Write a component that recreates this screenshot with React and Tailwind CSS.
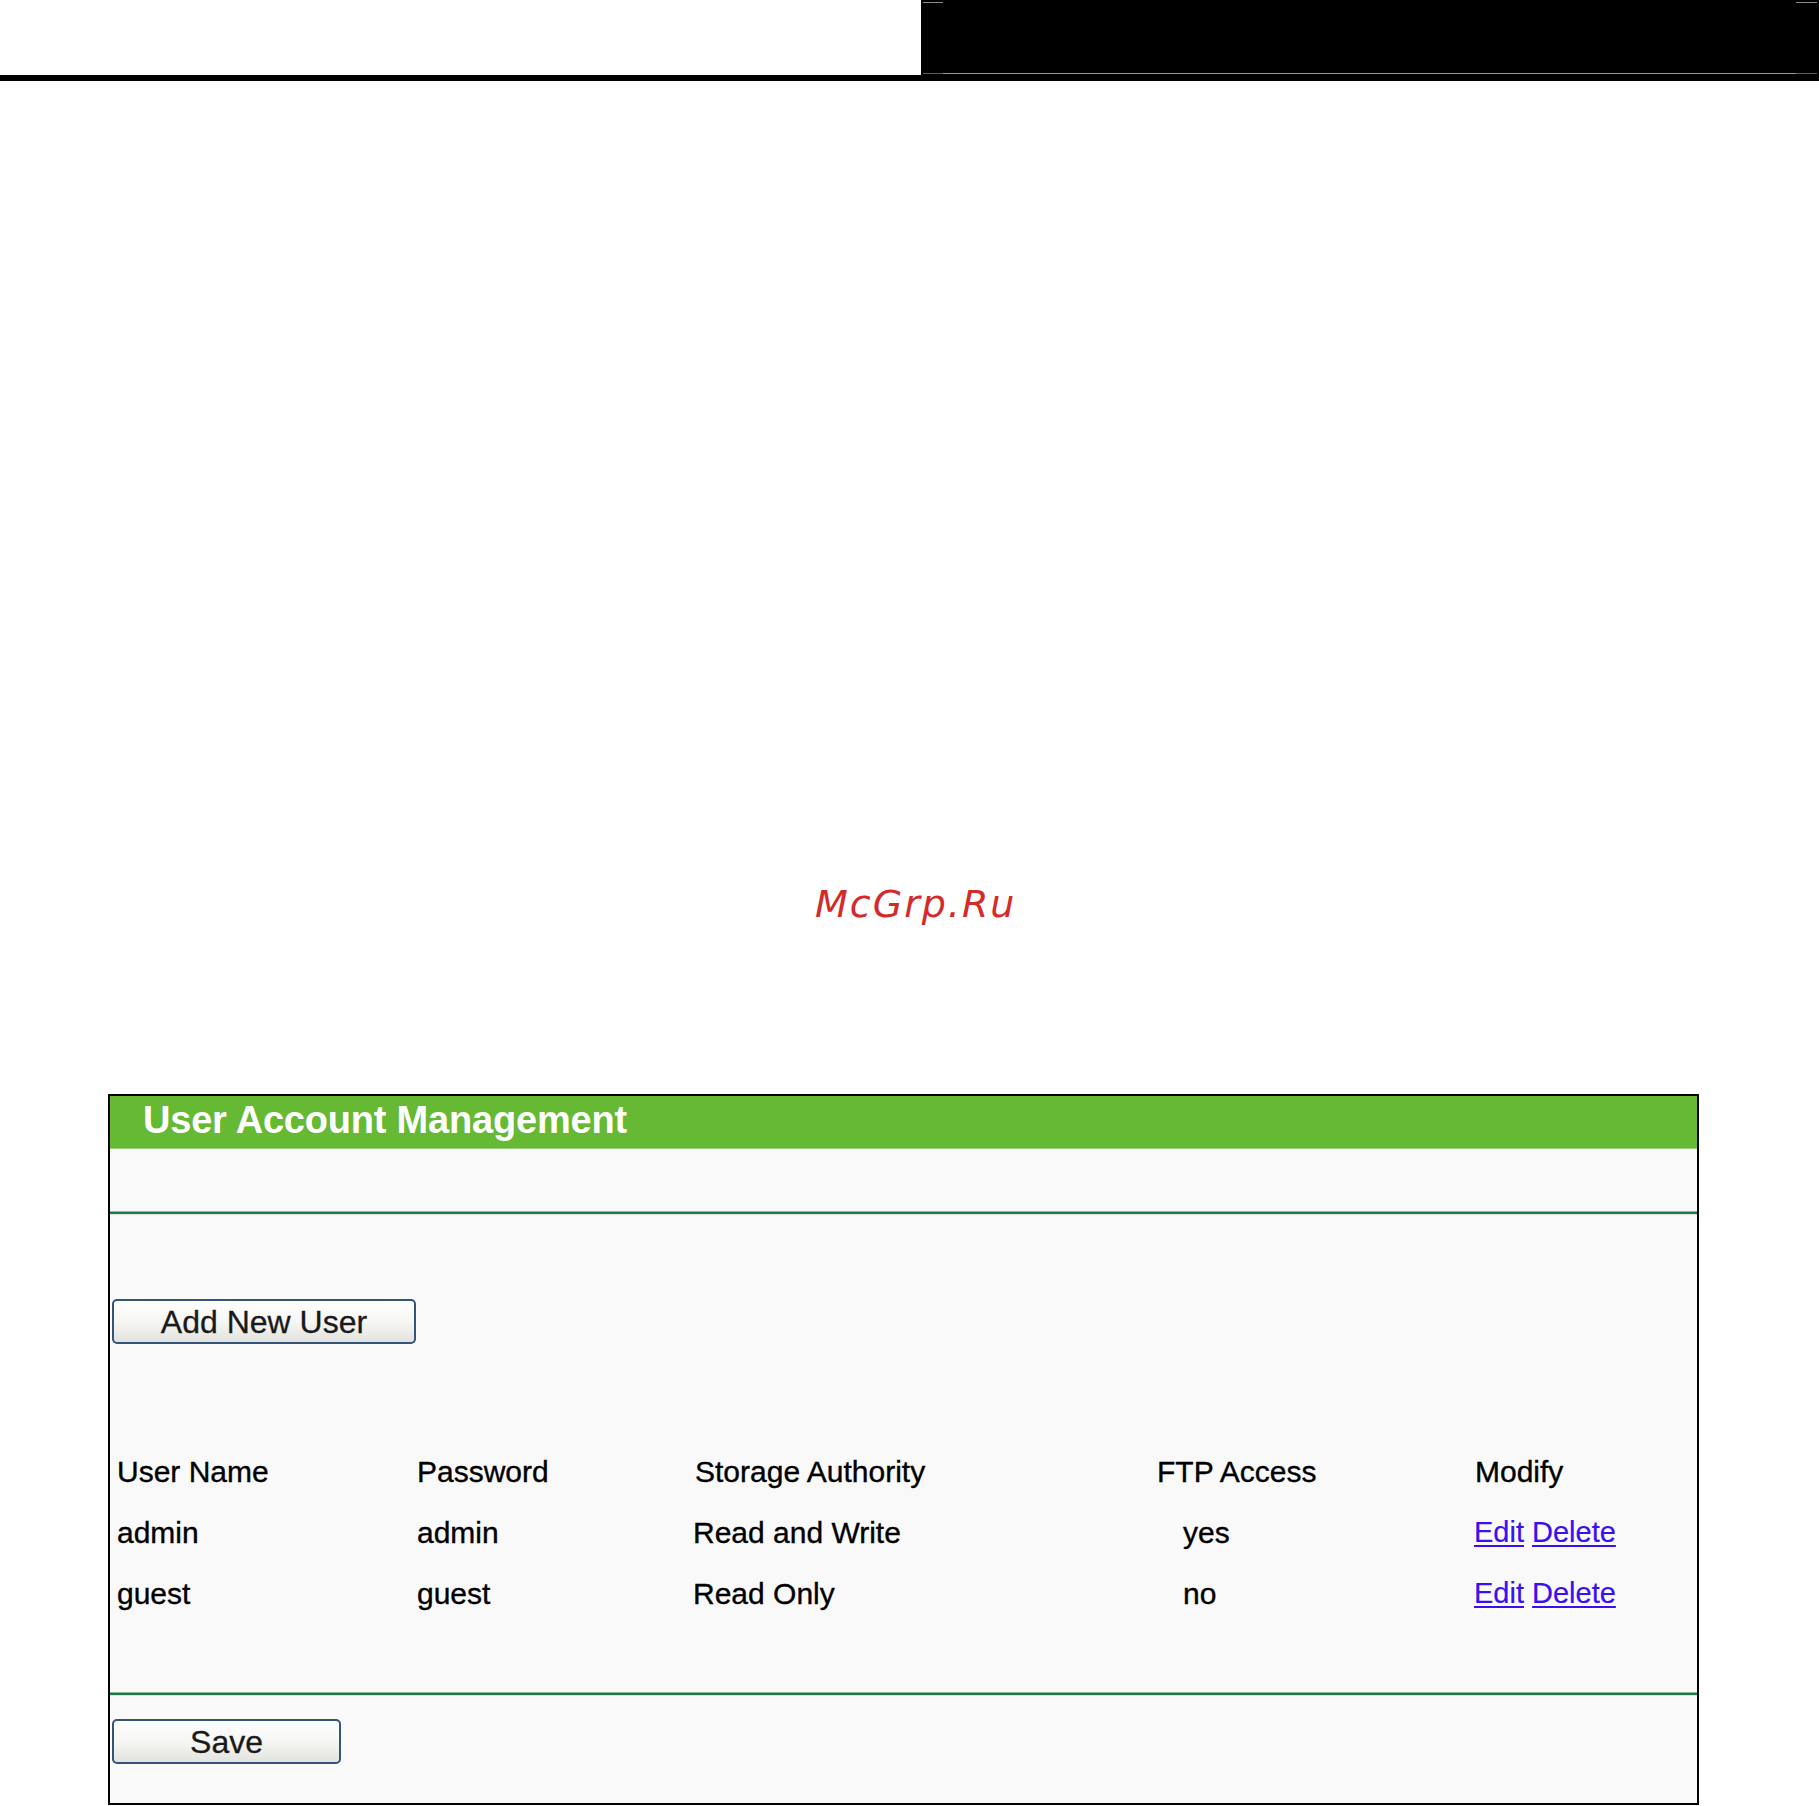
import React from "react";

const rows = [
  { name: "admin", pass: "admin", auth: "Read and Write", ftp: "yes" },
  { name: "guest", pass: "guest", auth: "Read Only", ftp: "no" },
];

function Btn({ children, w }) {
  return (
    <button
      className={`${w} h-[45px] rounded-[5px] border-2 border-[#34547a] bg-gradient-to-b from-[#ffffff] via-[#f6f6f4] to-[#e2e2de] text-[32px] leading-none text-[#1a1a1a] flex items-center justify-center [-webkit-text-stroke:0.3px_#1a1a1a]`}
      style={{ fontFamily: '"Liberation Sans", Arial, sans-serif' }}
    >
      {children}
    </button>
  );
}

function Divider() {
  return (
    <div className="flex flex-col">
      <div className="h-px bg-[#8fb99c]" />
      <div className="h-[2px] bg-[#22784a]" />
      <div className="h-px bg-[#d9e6dd]" />
    </div>
  );
}

export default function App() {
  return (
    <div
      className="w-[1819px] h-[1806px] bg-white overflow-hidden flex flex-col"
      style={{ fontFamily: '"Liberation Sans", Arial, sans-serif' }}
    >
      {/* top bar */}
      <div className="flex h-[75px]">
        <div className="w-[921px] bg-white" />
        <div className="flex-1 bg-black flex flex-col justify-between">
          <div className="flex justify-between pt-[2px] px-[2px]">
            <div className="w-[20px] h-px bg-[#8a8a8a]" />
            <div className="w-[21px] h-px bg-[#8a8a8a]" />
          </div>
          <div className="flex px-[2px] pb-px">
            <div className="w-[20px] h-px bg-[#5a5a5a]" />
            <div className="flex-1 h-px bg-[#9a9a9a]" />
            <div className="w-[21px] h-px bg-[#5a5a5a]" />
          </div>
        </div>
      </div>
      <div className="h-[6px] bg-black" />

      {/* watermark */}
      <div className="mt-[801px] pl-[815px] h-[44px]">
        <span
          className="italic text-[38px] leading-[44px] tracking-[2px] text-[#d42a2a]"
          style={{ fontFamily: '"DejaVu Sans", Verdana, sans-serif' }}
        >
          McGrp.Ru
        </span>
      </div>

      {/* panel */}
      <div className="mt-[168px] ml-[108px] w-[1591px] h-[711px] border-2 border-black bg-[#f9f9f9] flex flex-col">
        <div className="h-[53px] bg-[#66b933] flex flex-col">
          <div className="flex-1 pl-[33px]">
            <span className="text-white font-bold text-[38px] leading-[49px] tracking-[-0.2px]">
              User Account Management
            </span>
          </div>
          <div className="h-px bg-[#9ccf7e]" />
        </div>
        <div className="h-[62px]" />
        <Divider />
        <div className="pt-[84px] pl-[2px]">
          <Btn w="w-[304px]">Add New User</Btn>
        </div>
        <div className="mt-[97px] pl-[7px] text-[30px] leading-[61px] text-black [-webkit-text-stroke:0.35px_#000]">
          <div className="grid grid-cols-[300px_278px_462px_318px_1fr]">
            <div>User Name</div>
            <div>Password</div>
            <div>Storage Authority</div>
            <div>FTP Access</div>
            <div>Modify</div>
          </div>
          {rows.map((r) => (
            <div key={r.name} className="grid grid-cols-[300px_278px_462px_318px_1fr]">
              <div>{r.name}</div>
              <div>{r.pass}</div>
              <div className="-ml-[2px]">{r.auth}</div>
              <div className="pl-[26px]">{r.ftp}</div>
              <div className="-ml-px text-[29px] [-webkit-text-stroke:0.2px_#3a10f0]">
                <a href="#" className="text-[#3a10f0] underline underline-offset-[3px]">Edit</a>{" "}
                <a href="#" className="text-[#3a10f0] underline underline-offset-[3px]">Delete</a>
              </div>
            </div>
          ))}
        </div>
        <div className="h-[68px]" />
        <Divider />
        <div className="pt-[23px] pl-[2px]">
          <Btn w="w-[229px]">Save</Btn>
        </div>
      </div>
    </div>
  );
}
